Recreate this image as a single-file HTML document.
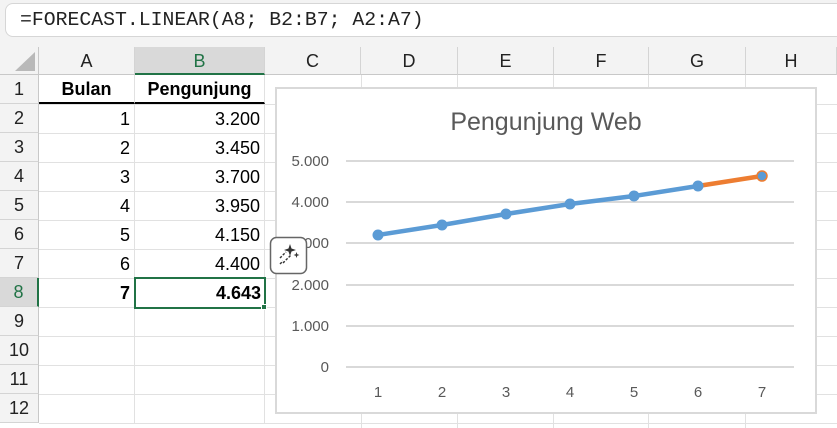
<!DOCTYPE html>
<html><head><style>
*{margin:0;padding:0;box-sizing:border-box}
body{width:837px;height:428px;overflow:hidden;background:#fff;position:relative;font-family:"Liberation Sans",sans-serif;}
.abs{position:absolute}
.fb{left:5px;top:3px;width:840px;height:34px;border:1px solid #d6d6d6;border-radius:8px;background:#fff;font-family:"Liberation Mono",monospace;font-size:19.8px;line-height:32px;padding-left:14px;color:#222}
.hdr{background:#f3f3f3}
.ch{position:absolute;top:47px;height:28px;font-size:18px;line-height:29px;text-align:center;color:#222;border-right:1px solid #d4d4d4;border-bottom:1px solid #c8c8c8}
.rh{position:absolute;left:0;width:39px;height:29px;font-size:18px;line-height:29px;text-align:center;color:#222;border-bottom:1px solid #d4d4d4;border-right:1px solid #c8c8c8;background:#f3f3f3}
.c{position:absolute;height:29px;font-size:18px;line-height:29px;text-align:right;padding-right:4px;color:#000;border-right:1px solid #e1e1e1;border-bottom:1px solid #e1e1e1}
.hl{position:absolute;height:1px;background:#e1e1e1;left:39px;width:800px}
.vl{position:absolute;width:1px;background:#e1e1e1;top:75px;height:353px}
</style></head><body>
<div class="abs" style="left:0;top:0;width:837px;height:47px;background:#f3f3f3"></div>
<div class="abs fb">=FORECAST.LINEAR(A8; B2:B7; A2:A7)</div>
<div class="abs" style="left:0;top:47px;width:39px;height:28px;background:#f3f3f3;border-right:1px solid #c8c8c8;border-bottom:1px solid #c8c8c8"></div>
<svg class="abs" style="left:14px;top:52px" width="22" height="20"><polygon points="21,0 21,19 1,19" fill="#b9b9b9"/></svg>
<div class="ch hdr" style="left:39px;width:96px">A</div>
<div class="ch" style="left:135px;width:130px;background:#d9d9d9;color:#217346;border-bottom:2px solid #217346">B</div>
<div class="ch hdr" style="left:265px;width:96px">C</div>
<div class="ch hdr" style="left:361px;width:97px">D</div>
<div class="ch hdr" style="left:458px;width:96px">E</div>
<div class="ch hdr" style="left:554px;width:95px">F</div>
<div class="ch hdr" style="left:649px;width:97px">G</div>
<div class="ch hdr" style="left:746px;width:91px">H</div>
<div class="vl" style="left:361px"></div><div class="vl" style="left:457px"></div><div class="vl" style="left:553px"></div><div class="vl" style="left:648px"></div><div class="vl" style="left:745px"></div>
<div class="hl" style="top:104px"></div><div class="hl" style="top:133px"></div><div class="hl" style="top:162px"></div><div class="hl" style="top:191px"></div><div class="hl" style="top:220px"></div><div class="hl" style="top:249px"></div><div class="hl" style="top:278px"></div><div class="hl" style="top:307px"></div><div class="hl" style="top:336px"></div><div class="hl" style="top:365px"></div><div class="hl" style="top:394px"></div><div class="hl" style="top:423px"></div>
<div class="rh" style="top:75px">1</div><div class="rh" style="top:104px">2</div><div class="rh" style="top:133px">3</div><div class="rh" style="top:162px">4</div><div class="rh" style="top:191px">5</div><div class="rh" style="top:220px">6</div><div class="rh" style="top:249px">7</div>
<div class="rh" style="top:278px;background:#d9d9d9;color:#217346;border-right:2px solid #217346">8</div>
<div class="rh" style="top:307px">9</div><div class="rh" style="top:336px">10</div><div class="rh" style="top:365px">11</div><div class="rh" style="top:394px">12</div>
<div class="c" style="left:39px;top:75px;width:96px;text-align:center;padding:0;font-weight:bold;border-bottom:2px solid #000">Bulan</div>
<div class="c" style="left:135px;top:75px;width:130px;text-align:center;padding:0;font-weight:bold;border-bottom:2px solid #000">Pengunjung</div>
<div class="c" style="left:39px;top:105px;width:96px">1</div><div class="c" style="left:135px;top:105px;width:130px">3.200</div>
<div class="c" style="left:39px;top:134px;width:96px">2</div><div class="c" style="left:135px;top:134px;width:130px">3.450</div>
<div class="c" style="left:39px;top:163px;width:96px">3</div><div class="c" style="left:135px;top:163px;width:130px">3.700</div>
<div class="c" style="left:39px;top:192px;width:96px">4</div><div class="c" style="left:135px;top:192px;width:130px">3.950</div>
<div class="c" style="left:39px;top:221px;width:96px">5</div><div class="c" style="left:135px;top:221px;width:130px">4.150</div>
<div class="c" style="left:39px;top:250px;width:96px">6</div><div class="c" style="left:135px;top:250px;width:130px">4.400</div>
<div class="c" style="left:39px;top:279px;width:96px;font-weight:bold">7</div>
<div class="c" style="left:39px;top:336px;width:96px;height:88px"></div><div class="c" style="left:39px;top:308px;width:96px"></div>
<div class="c" style="left:135px;top:308px;width:130px;height:116px"></div>
<div class="abs" style="left:134px;top:277px;width:132px;height:32px;border:2px solid #217346;font-size:18px;font-weight:bold;line-height:28px;text-align:right;padding-right:3px;background:#fff">4.643</div>
<div class="abs" style="left:261px;top:304px;width:6px;height:6px;background:#217346;border:1px solid #fff"></div>
<div class="abs" style="left:275px;top:87px;width:542px;height:327px;background:#fff;border:2px solid #d9d9d9"></div>
<svg class="abs" style="left:0;top:0" width="837" height="428">
<g stroke="#d9d9d9" stroke-width="2">
<line x1="346" x2="794" y1="161" y2="161"/><line x1="346" x2="794" y1="202" y2="202"/><line x1="346" x2="794" y1="243" y2="243"/><line x1="346" x2="794" y1="285" y2="285"/><line x1="346" x2="794" y1="326" y2="326"/><line x1="346" x2="794" y1="367" y2="367"/></g>
<text x="546" y="130" font-family="Liberation Sans" font-size="25" fill="#595959" text-anchor="middle">Pengunjung Web</text>
<g font-family="Liberation Sans" font-size="15" fill="#595959" text-anchor="end">
<text x="329" y="166">5.000</text><text x="329" y="207">4.000</text><text x="329" y="248">3.000</text><text x="329" y="290">2.000</text><text x="329" y="331">1.000</text><text x="329" y="372">0</text></g>
<g font-family="Liberation Sans" font-size="15" fill="#595959" text-anchor="middle">
<text x="378" y="397">1</text><text x="442" y="397">2</text><text x="506" y="397">3</text><text x="570" y="397">4</text><text x="634" y="397">5</text><text x="698" y="397">6</text><text x="762" y="397">7</text></g>
<polyline points="698,186 762,176" stroke="#ed7d31" stroke-width="4.5" fill="none"/>
<polyline points="378,235 442,225 506,214 570,204 634,196 698,186" stroke="#5b9bd5" stroke-width="4.5" fill="none"/>
<g fill="#5b9bd5"><circle cx="378" cy="235" r="5.5"/><circle cx="442" cy="225" r="5.5"/><circle cx="506" cy="214" r="5.5"/><circle cx="570" cy="204" r="5.5"/><circle cx="634" cy="196" r="5.5"/><circle cx="698" cy="186" r="5.5"/><circle cx="762" cy="176" r="5" stroke="#ed7d31" stroke-width="1.5"/></g>
<rect x="270.5" y="237.5" width="36" height="36" rx="6" fill="#fff" stroke="#666" stroke-width="1.5"/>
<path d="M290 244 L291.5 248.5 L296 250 L291.5 251.5 L290 256 L288.5 251.5 L284 250 L288.5 248.5Z" fill="#333"/>
<path d="M296.5 252 L297.3 254.2 L299.5 255 L297.3 255.8 L296.5 258 L295.7 255.8 L293.5 255 L295.7 254.2Z" fill="#333"/>
<g stroke="#333" stroke-width="1.4" stroke-dasharray="2.5 1.5"><line x1="280" y1="258" x2="286" y2="252"/><line x1="283" y1="263" x2="291" y2="255"/><line x1="280" y1="264" x2="283" y2="261"/></g>
</svg>
</body></html>
